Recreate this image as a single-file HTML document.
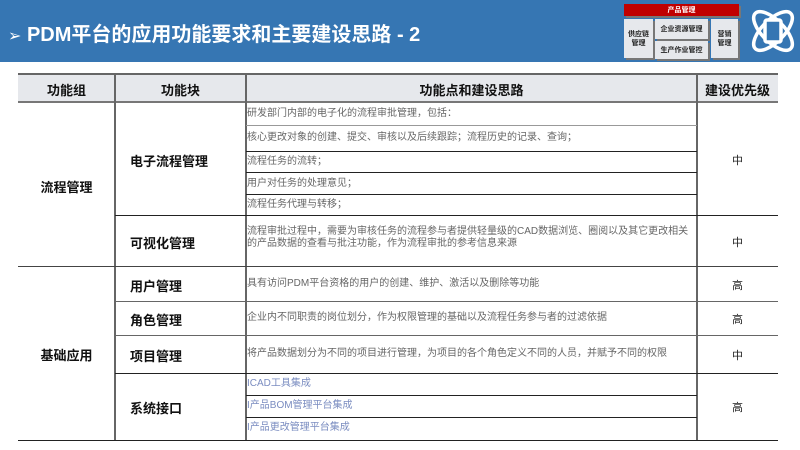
<!DOCTYPE html>
<html><head><meta charset="utf-8"><style>
*{margin:0;padding:0;box-sizing:border-box}
body{width:800px;height:450px;background:#fff;position:relative;overflow:hidden;font-family:"Liberation Sans","Noto Sans CJK SC",sans-serif}
.bar{position:absolute;left:0;top:0;width:800px;height:62px;background:#3676b3}
.title{position:absolute;left:8px;top:18px;color:#fff;font-size:20px;font-weight:bold;letter-spacing:0px}
.a{position:absolute}
.hl{position:absolute;height:1px;background:#222}
.gl{position:absolute;height:1px;background:#999}
.vl{position:absolute;width:2px;background:#666}
.t{position:absolute;font-size:10px;color:#666;white-space:nowrap;line-height:15px}
.b{position:absolute;font-size:13px;font-weight:bold;color:#111;text-align:center}
.c{position:absolute;font-size:13px;font-weight:bold;color:#111;left:130px}
.p{position:absolute;font-size:11px;color:#222;text-align:center;width:81px;left:697px}
.box{position:absolute;background:#e6e8ec;font-size:7px;font-weight:bold;color:#222;text-align:center;box-shadow:2px 2px 0 #777;line-height:9px;display:flex;align-items:center;justify-content:center}
</style></head><body>
<div class="bar"></div>
<div class="title"><span style="font-weight:normal;font-size:16px">➢</span> PDM平台的应用功能要求和主要建设思路 - 2</div>
<div class="box" style="left:624px;top:4px;width:115px;height:12px;background:#c00000;color:#fff">产品管理</div>
<div class="box" style="left:624px;top:19px;width:29px;height:39px">供应链<br>管理</div>
<div class="box" style="left:655px;top:19px;width:53px;height:20px">企业资源管理</div>
<div class="box" style="left:655px;top:41px;width:53px;height:18px">生产作业管控</div>
<div class="box" style="left:711px;top:19px;width:27px;height:39px">营销<br>管理</div>
<svg class="a" style="left:746px;top:4px" width="54" height="54" viewBox="0 0 54 54" fill="none" stroke="#fff" stroke-width="3.5">
<ellipse cx="27" cy="27" rx="25" ry="11" transform="rotate(45 27 27)"/>
<ellipse cx="27" cy="27" rx="25" ry="11" transform="rotate(-45 27 27)"/>
<rect x="19" y="16" width="16" height="22" rx="2" fill="#3676b3"/>
</svg>
<!-- header -->
<div class="a" style="left:18px;top:73px;width:760px;height:30px;background:#e6e8ec;border-top:2px solid #666;border-bottom:2px solid #777"></div>
<div class="b" style="left:18px;top:80px;width:97px">功能组</div>
<div class="b" style="left:115px;top:80px;width:131px">功能块</div>
<div class="b" style="left:246px;top:80px;width:451px">功能点和建设思路</div>
<div class="b" style="left:697px;top:80px;width:81px">建设优先级</div>
<div class="vl" style="left:114px;top:73px;height:367px"></div>
<div class="vl" style="left:245px;top:73px;height:367px"></div>
<div class="vl" style="left:696px;top:73px;height:367px"></div>
<!-- row lines -->
<div class="gl" style="left:246px;top:125px;width:451px"></div>
<div class="hl" style="left:246px;top:151px;width:451px"></div>
<div class="hl" style="left:246px;top:172px;width:451px"></div>
<div class="hl" style="left:246px;top:194px;width:451px"></div>
<div class="hl" style="left:115px;top:215px;width:663px"></div>
<div class="hl" style="left:18px;top:266px;width:760px;background:#444"></div>
<div class="hl" style="left:115px;top:301px;width:663px;background:#666"></div>
<div class="hl" style="left:115px;top:335px;width:663px;background:#666"></div>
<div class="hl" style="left:115px;top:373px;width:663px"></div>
<div class="hl" style="left:246px;top:395px;width:451px"></div>
<div class="hl" style="left:246px;top:417px;width:451px"></div>
<div class="hl" style="left:18px;top:440px;width:760px"></div>
<!-- group -->
<div class="b" style="left:18px;top:177px;width:97px">流程管理</div>
<div class="b" style="left:18px;top:345px;width:97px">基础应用</div>
<div class="c" style="top:151px">电子流程管理</div>
<div class="c" style="top:233px">可视化管理</div>
<div class="c" style="top:276px">用户管理</div>
<div class="c" style="top:310px">角色管理</div>
<div class="c" style="top:346px">项目管理</div>
<div class="c" style="top:398px">系统接口</div>
<div class="t" style="left:247px;top:106px">研发部门内部的电子化的流程审批管理，包括：</div>
<div class="t" style="left:247px;top:130px">核心更改对象的创建、提交、审核以及后续跟踪；流程历史的记录、查询；</div>
<div class="t" style="left:247px;top:154px">流程任务的流转；</div>
<div class="t" style="left:247px;top:176px">用户对任务的处理意见；</div>
<div class="t" style="left:247px;top:197px">流程任务代理与转移；</div>
<div class="t" style="left:247px;top:226px;line-height:12px">流程审批过程中，需要为审核任务的流程参与者提供轻量级的CAD数据浏览、圈阅以及其它更改相关<br>的产品数据的查看与批注功能，作为流程审批的参考信息来源</div>
<div class="t" style="left:247px;top:276px">具有访问PDM平台资格的用户的创建、维护、激活以及删除等功能</div>
<div class="t" style="left:247px;top:310px">企业内不同职责的岗位划分，作为权限管理的基础以及流程任务参与者的过滤依据</div>
<div class="t" style="left:247px;top:346px">将产品数据划分为不同的项目进行管理，为项目的各个角色定义不同的人员，并赋予不同的权限</div>
<div class="t" style="left:247px;top:376px;color:#7a8cc0">ICAD工具集成</div>
<div class="t" style="left:247px;top:398px;color:#7a8cc0">I产品BOM管理平台集成</div>
<div class="t" style="left:247px;top:420px;color:#7a8cc0">I产品更改管理平台集成</div>
<div class="p" style="top:152px">中</div>
<div class="p" style="top:234px">中</div>
<div class="p" style="top:277px">高</div>
<div class="p" style="top:311px">高</div>
<div class="p" style="top:347px">中</div>
<div class="p" style="top:399px">高</div>
</body></html>
